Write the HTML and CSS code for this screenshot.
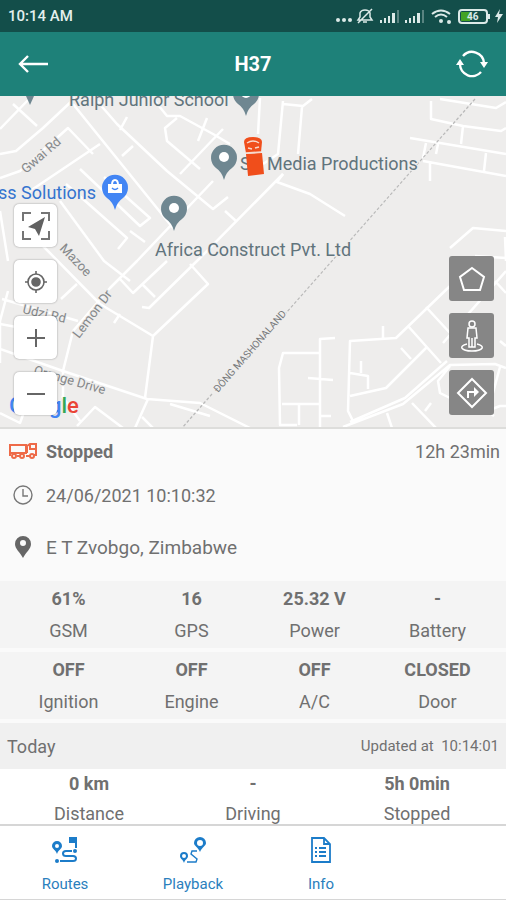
FILE: index.html
```html
<!DOCTYPE html>
<html lang="en">
<head>
	<title>H37</title>
	<meta charset="utf-8">
	<meta name="viewport" content="width=device-width, initial-scale=1">
	<link rel="stylesheet" href="styles.css">
</head>
<body>
	<div class="app">
		<!-- system bar -->
		<div class="sysbar">
			<span class="sysbar-time">10:14 AM</span>
			<svg class="sysbar-icons" width="168" height="20" viewBox="335 6 168 20">
				<g fill="#dceae8">
					<circle cx="338" cy="20" r="2"/><circle cx="344" cy="20" r="2"/><circle cx="350" cy="20" r="2"/>
					<path d="M380 20h2v3h-2zM384 18h2v5h-2zM388 16h2v7h-2zM392 13h3v10h-3z"/>
					<path d="M405 20h2v3h-2zM409 18h2v5h-2zM413 16h2v7h-2zM417 13h3v10h-3z"/>
					<path d="M397 10h2v13h-2zM422 10h2v13h-2z" opacity=".35"/>
					<circle cx="441" cy="21" r="2"/><circle cx="449" cy="22" r="2"/>
					<path d="M488 14h2v5h-2zM500 9l-5 8h3l-1 6 6-9h-4z"/>
				</g>
				<g fill="none" stroke="#dceae8" stroke-width="2">
					<path d="M358 20h14l-2-3v-4q-1-3-5-3t-5 3v4zM363 22h4M372 9l-14 14" stroke-width="1.5"/>
					<path d="M432 14q9-7 18 0M435 17q6-5 12 0"/>
					<rect x="459" y="10" width="28" height="13" rx="3"/>
				</g>
				<path fill="#43a324" d="M461 12h9v9h-9z"/>
				<text class="sysbar-battery" x="467" y="20">46</text>
			</svg>
		</div>

		<!-- title bar -->
		<header class="titlebar">
			<button class="titlebar-btn" aria-label="Back">
				<svg width="32" height="20" viewBox="0 0 32 20" fill="none" stroke="#fff" stroke-width="2.4"><path d="M30 10H3M10 2L2 10l8 8"/></svg>
			</button>
			<h1 class="titlebar-name">H37</h1>
			<button class="titlebar-btn" aria-label="Refresh">
				<svg width="32" height="30" viewBox="0 0 32 30">
					<g fill="none" stroke="#fff" stroke-width="2.4"><path d="M7 7A12 12 0 0 1 28 14M25 23A12 12 0 0 1 4 15"/></g>
					<path fill="#fff" d="M24 13h8l-4 6zM0 16h8l-4-6z"/>
				</svg>
			</button>
		</header>

		<!-- map -->
		<section class="map">
			<svg class="map-canvas" viewBox="0 95 506 333" preserveAspectRatio="xMidYMid slice">
				<g class="roads">
					<path d="M0 128L30 97M0 153L16 150 43 127 75 97M13 103L37 125M0 177L20 170 68 127 93 153M73 103L173 227M97 100L117 123 167 170 213 208 228 196M30 190L100 143M80 168L140 225 150 217 104 176M66 183L127 237 118 248M122 155L133 145M127 116L120 129"/>
					<path d="M155 100L167 115 180 115 213 133 230 143M177 117L165 127 167 140 200 168M207 117L198 140M223 128L180 173M130 230L145 241M225 210L236 220M60 200L104 260 130 280"/>
					<path d="M283 173L200 257 149 307 142 306M213 180L137 260 110 287 73 330 63 370V395M167 260L133 292 120 278M143 284L155 296M190 263L208 283 153 335 145 397M43 245L100 303 153 335M120 313L114 322M77 283L61 298"/>
					<path d="M0 348L63 370 147 398 200 402 250 427M170 403L210 415M0 323L38 330M2 298L78 320M0 362V320L8 290M0 210L8 260M77 425L95 406 123 427M148 398L135 427M142 416L153 427M0 412L20 422 28 400M62 395L80 420"/>
					<path d="M260 97L258 133M283 100L278 153 263 163M283 103L303 105 312 98M302 106L298 153M283 173L277 181 310 193 345 215M431 100V118L463 125 501 130 506 127M440 98L496 107 506 101M410 137L506 153M423 160L506 175M430 160V180M463 125L461 143M486 152L484 170M426 142L423 157M438 143L436 153"/>
					<path d="M450 247L473 227 506 230M475 255L506 257M506 260L505 236M450 285L396 337 350 340 348 410 353 420M383 325V338M350 395L386 387 426 347M408 325L441 362M426 306L450 332M401 347L411 358M350 372L368 375V388M361 360V372"/>
					<path d="M343 426L403 403 450 364 495 363 506 367M350 421L405 397 447 360M412 402L436 427M425 410L431 402M387 412L392 427M320 428V338L335 337M320 352H283L279 367 280 424H297M282 403H320M299 404V424M308 377L333 379M320 415H331M443 342L462 320 506 270M450 365L438 380 440 392 452 398M494 415L487 410 500 405H506M495 280L506 292M500 340L506 345M500 366L493 392"/>
				</g>
				<path class="border-line" d="M475 98L286 312M212 393L182 427"/>

				<g class="pins">
					<path d="M224 179q-2-8-8-12a13 13 0 1 1 16 0q-6 4-8 12z"/>
					<path d="M174 230q-2-8-8-12a13 13 0 1 1 16 0q-6 4-8 12z"/>
					<path d="M246 115q-2-8-8-12a13 13 0 1 1 16 0q-6 4-8 12z"/>
					<path d="M30 104l-4-9h8z"/>
					<path class="pin-shop" d="M115 209q-2-8-8-12a13 13 0 1 1 16 0q-6 4-8 12z"/>
				</g>
				<circle cx="224" cy="156" r="5" fill="#fff"/>
				<circle cx="174" cy="207" r="5" fill="#fff"/>
				<circle cx="246" cy="92" r="5" fill="#fff"/>
				<path d="M108 183h14v9h-14z" fill="#fff"/>
				<path d="M112 184q0-5 3-5t3 5" fill="none" stroke="#fff" stroke-width="2"/>
				<path d="M112 187q3 3 6 0" fill="none" stroke="#4285f4" stroke-width="1.5"/>

				<g class="place">
					<text x="69" y="105">Ralph Junior School</text>
					<text x="240" y="169">S</text>
					<text x="267" y="169">Media Productions</text>
					<text x="155" y="255">Africa Construct Pvt. Ltd</text>
					<text class="place-shop" x="-2" y="198">ss Solutions</text>
				</g>
				<g class="street">
					<text transform="translate(26 173) rotate(-41)">Gwai Rd</text>
					<text transform="translate(59 248) rotate(46)">Mazoe</text>
					<text transform="translate(22 312) rotate(13)">Udzi Rd</text>
					<text transform="translate(79 338) rotate(-53)">Lemon Dr</text>
					<text transform="translate(33 373) rotate(16)">Orange Drive</text>
				</g>
				<text class="region" transform="translate(218 392) rotate(-49)">ĐÔNG MASHONALAND</text>

				<!-- vehicle -->
				<g fill="#f04e1b">
					<path d="M246 153l16-1 2 21-16 2z"/>
					<path d="M244 141q0-5 9-5t9 5l-1 10-15 1z"/>
					<path d="M247 142q6-4 12 0M248 147l4 1M255 147l4-1M246 152l15-1" fill="none" stroke="#f8d9cc" stroke-width="1.5"/>
				</g>

				<text class="google" x="9" y="412"><tspan fill="#4285f4">G</tspan><tspan fill="#ea4335">o</tspan><tspan fill="#fbbc05">o</tspan><tspan fill="#4285f4">g</tspan><tspan fill="#34a853">l</tspan><tspan fill="#ea4335">e</tspan></text>
			</svg>

			<div class="map-tools map-tools-left">
				<button class="tool" aria-label="Follow vehicle">
					<svg width="30" height="30" viewBox="0 0 30 30"><path d="M2 10V2h8M20 2h8v8M28 20v8h-8M10 28H2v-8" fill="none" stroke="#757575" stroke-width="2"/><path d="M24 6L7 16l7 2 4 7z" fill="#616161"/></svg>
				</button>
				<button class="tool" aria-label="My location">
					<svg width="24" height="24" viewBox="0 0 24 24" fill="none" stroke="#666" stroke-width="1.6"><circle cx="12" cy="12" r="8"/><path d="M12 1v3M12 20v3M1 12h3M20 12h3"/><circle cx="12" cy="12" r="4" fill="#666"/></svg>
				</button>
				<button class="tool" aria-label="Zoom in">
					<svg width="20" height="20" viewBox="0 0 20 20" stroke="#666" stroke-width="2"><path d="M1 10h18M10 1v18"/></svg>
				</button>
				<button class="tool" aria-label="Zoom out">
					<svg width="20" height="20" viewBox="0 0 20 20" stroke="#666" stroke-width="2"><path d="M1 10h18"/></svg>
				</button>
			</div>

			<div class="map-tools map-tools-right">
				<button class="tool tool-dark" aria-label="Geofence">
					<svg width="28" height="28" viewBox="0 0 28 28" fill="none" stroke="#fff" stroke-width="2"><path d="M14 3l12 9-4 13H6L2 12z"/></svg>
				</button>
				<button class="tool tool-dark" aria-label="Street view">
					<svg width="26" height="34" viewBox="0 0 26 34" fill="none" stroke="#fff" stroke-width="1.5"><circle cx="13" cy="5" r="3"/><path d="M9 9h8l1 10h-2v9h-6v-9H8zM13 19v9"/><path d="M8 25c-9 2-6 7 5 7s14-5 5-7"/></svg>
				</button>
				<button class="tool tool-dark" aria-label="Directions">
					<svg width="32" height="32" viewBox="0 0 32 32" fill="none" stroke="#fff" stroke-width="2"><path d="M16 2l14 14-14 14L2 16z"/><path d="M12 21v-6h8"/><path d="M18 10l5 5-5 5z" fill="#fff" stroke="none"/></svg>
				</button>
			</div>
		</section>

		<!-- vehicle details -->
		<main class="panel">
			<div class="line">
				<span class="line-icon">
					<svg width="30" height="18" viewBox="0 0 30 18" fill="none" stroke="#ee6a48" stroke-width="2"><path d="M2 3h16v8H2zM19 11V4l3-2h6v11h-2M2 11v3M9 14h3M18 14h4M22 3v4h6"/><circle cx="6" cy="14" r="2"/><circle cx="14" cy="14" r="2"/><circle cx="24" cy="14" r="2"/></svg>
				</span>
				<b>Stopped</b>
				<span class="line-end">12h 23min</span>
			</div>
			<div class="line line-date">
				<span class="line-icon">
					<svg width="20" height="20" viewBox="0 0 20 20" fill="none" stroke="#777" stroke-width="1.4"><circle cx="10" cy="10" r="9"/><path d="M10 4v7h5"/></svg>
				</span>
				<span>24/06/2021 10:10:32</span>
			</div>
			<div class="line line-address">
				<span class="line-icon">
					<svg width="18" height="24" viewBox="0 0 18 24" fill="#666" fill-rule="evenodd"><path d="M9 23C6 17 1 14 1 9a8 8 0 0 1 16 0c0 5-5 8-8 14zM9 5a3 3 0 1 0 0 6 3 3 0 0 0 0-6z"/></svg>
				</span>
				<span>E T Zvobgo, Zimbabwe</span>
			</div>

			<dl class="stats">
				<div class="stat"><dt>GSM</dt><dd>61%</dd></div>
				<div class="stat"><dt>GPS</dt><dd>16</dd></div>
				<div class="stat"><dt>Power</dt><dd>25.32 V</dd></div>
				<div class="stat"><dt>Battery</dt><dd>-</dd></div>
			</dl>
			<dl class="stats">
				<div class="stat"><dt>Ignition</dt><dd>OFF</dd></div>
				<div class="stat"><dt>Engine</dt><dd>OFF</dd></div>
				<div class="stat"><dt>A/C</dt><dd>OFF</dd></div>
				<div class="stat"><dt>Door</dt><dd>CLOSED</dd></div>
			</dl>

			<div class="today">
				<span>Today</span>
				<span class="today-updated">Updated at&nbsp; 10:14:01</span>
			</div>
			<dl class="stats stats-today">
				<div class="stat"><dt>Distance</dt><dd>0 km</dd></div>
				<div class="stat"><dt>Driving</dt><dd>-</dd></div>
				<div class="stat"><dt>Stopped</dt><dd>5h 0min</dd></div>
			</dl>
		</main>

		<!-- bottom menu -->
		<nav class="menu">
			<a href="#" class="menu-link">
				<svg width="28" height="28" viewBox="0 0 28 28" fill="#1c7cc9">
					<path fill-rule="evenodd" d="M6 18C5 14 1 13 1 10a5 5 0 0 1 10 0c0 3-4 4-5 8zM6 8a2 2 0 1 0 0 4 2 2 0 0 0 0-4z"/>
					<path d="M18 1h8v11h-2V7h-6z"/><circle cx="24" cy="15" r="2"/><circle cx="6" cy="25" r="2"/>
					<path d="M21 15h-6c-4 0-4 5 0 5h7c4 0 4 5 0 5H9" fill="none" stroke="#1c7cc9" stroke-width="2"/>
				</svg>
				Routes
			</a>
			<a href="#" class="menu-link">
				<svg width="28" height="28" viewBox="0 0 28 28" fill="#1c7cc9" fill-rule="evenodd">
					<path d="M21 16C19 11 15 10 15 7a6 6 0 0 1 12 0c0 3-4 4-6 9zM21 4a3 3 0 1 0 0 6 3 3 0 0 0 0-6z"/>
					<path d="M5 27C4 23 1 23 1 20a4 4 0 0 1 8 0c0 3-3 3-4 7zM5 18a2 2 0 1 0 0 4 2 2 0 0 0 0-4z"/>
					<path d="M18 15h-5l-1 3 6 5-1 3H8" fill="none" stroke="#1c7cc9" stroke-width="1.4"/>
				</svg>
				Playback
			</a>
			<a href="#" class="menu-link">
				<svg width="28" height="28" viewBox="0 0 28 28" fill="none" stroke="#1c7cc9" stroke-width="1.8">
					<path d="M5 2h12l6 6v18H5zM17 2v6h6"/><path d="M12 12h7M12 16h7M12 20h7M8 12h2M8 16h2M8 20h2"/>
				</svg>
				Info
			</a>
		</nav>
	</div>
</body>
</html>
```
FILE: styles.css
```css
* {
	box-sizing: border-box;
}
body {
	margin: 0;
	font-family: Roboto, "Liberation Sans", sans-serif;
	font-size: 18px;
	color: #707070;
	background-color: #fafafa;
}
button {
	padding: 0;
	border: none;
	background: none;
	cursor: pointer;
}
.app {
	height: 100vh;
	display: flex;
	flex-direction: column;
}

/* system bar */
.sysbar {
	flex: none;
	height: 32px;
	padding: 0 3px 0 8px;
	display: flex;
	align-items: center;
	justify-content: space-between;
	background-color: #134e4a;
	color: #e4efee;
}
.sysbar-time {
	font-size: 15px;
	font-weight: 500;
}
.sysbar-battery {
	font-size: 10px;
	font-weight: bold;
	fill: #dceae8;
}

/* title bar */
.titlebar {
	flex: none;
	height: 64px;
	padding: 0 18px;
	display: flex;
	align-items: center;
	justify-content: space-between;
	background-color: #1e8179;
	color: #fff;
}
.titlebar-btn {
	display: flex;
}
.titlebar-name {
	margin: 0;
	font-size: 20px;
	font-weight: bold;
}

/* map */
.map {
	flex: none;
	height: 37vh;
	position: relative;
	overflow: hidden;
	background-color: #eeedec;
	border-bottom: 2px solid #dddddb;
}
.map-canvas {
	display: block;
	width: 100%;
	height: 37vh;
}
.roads {
	fill: none;
	stroke: #fff;
	stroke-width: 2.5;
	stroke-linejoin: round;
}
.border-line {
	fill: none;
	stroke: #b9b9b9;
	stroke-width: 1.2;
	stroke-dasharray: 3 2;
}
.pins {
	fill: #6f8791;
}
.pin-shop {
	fill: #4285f4;
}
.place {
	font-size: 18px;
	fill: #61747c;
	stroke: #eeedec;
	stroke-width: 2;
	paint-order: stroke;
}
.place-shop {
	fill: #3474cf;
}
.street {
	font-size: 13px;
	fill: #85888a;
	stroke: #eeedec;
	stroke-width: 2;
	paint-order: stroke;
}
.region {
	font-size: 10px;
	fill: #77797b;
}
.google {
	font-size: 22px;
	font-weight: 500;
}

/* buttons lying over the map */
.map-tools {
	position: absolute;
	bottom: 12px;
	display: flex;
	flex-direction: column;
}
.map-tools-left {
	left: 14px;
	gap: 13px;
}
.map-tools-right {
	right: 12px;
	gap: 12px;
}
.tool {
	width: 43px;
	height: 43px;
	display: flex;
	align-items: center;
	justify-content: center;
	border-radius: 5px;
	background-color: #fff;
	box-shadow: 0 0 2px rgba(0,0,0,.4);
}
.tool-dark {
	width: 45px;
	height: 45px;
	border-radius: 3px;
	background-color: #868686;
	box-shadow: none;
}

/* details */
.panel {
	flex: 1;
	min-height: 0;
	overflow: hidden;
}
.line {
	height: 44px;
	padding: 0 6px 0 8px;
	display: flex;
	align-items: center;
}
.line-address {
	height: 60px;
	margin-bottom: 4px;
	font-size: 19px;
}
.line-icon {
	width: 30px;
	margin-right: 8px;
	display: flex;
	justify-content: center;
}
.line-end {
	margin-left: auto;
}

.stats {
	margin: 0 0 4px;
	padding: 2px 7px 1px;
	display: flex;
	background-color: #f4f4f4;
}
.stat {
	flex: 1;
	display: flex;
	flex-direction: column-reverse;
	text-align: center;
	line-height: 32px;
}
.stat dd {
	margin: 0;
	font-weight: bold;
}
.today {
	height: 46px;
	padding: 0 7px;
	display: flex;
	align-items: center;
	justify-content: space-between;
	background-color: #f0f0f0;
}
.today-updated {
	font-size: 15px;
}
.stats-today {
	padding-top: 0;
	background-color: #fff;
}
.stats-today .stat {
	line-height: 30px;
}

/* bottom menu */
.menu {
	flex: none;
	height: 76px;
	padding-left: 1px;
	display: flex;
	background-color: #fff;
	border-top: 2px solid #d6d6d6;
	border-bottom: 1px solid #d6d6d6;
}
.menu-link {
	width: 128px;
	padding-top: 10px;
	display: flex;
	flex-direction: column;
	align-items: center;
	gap: 10px;
	font-size: 15px;
	line-height: 20px;
	color: #2b80bd;
	text-decoration: none;
}
```
